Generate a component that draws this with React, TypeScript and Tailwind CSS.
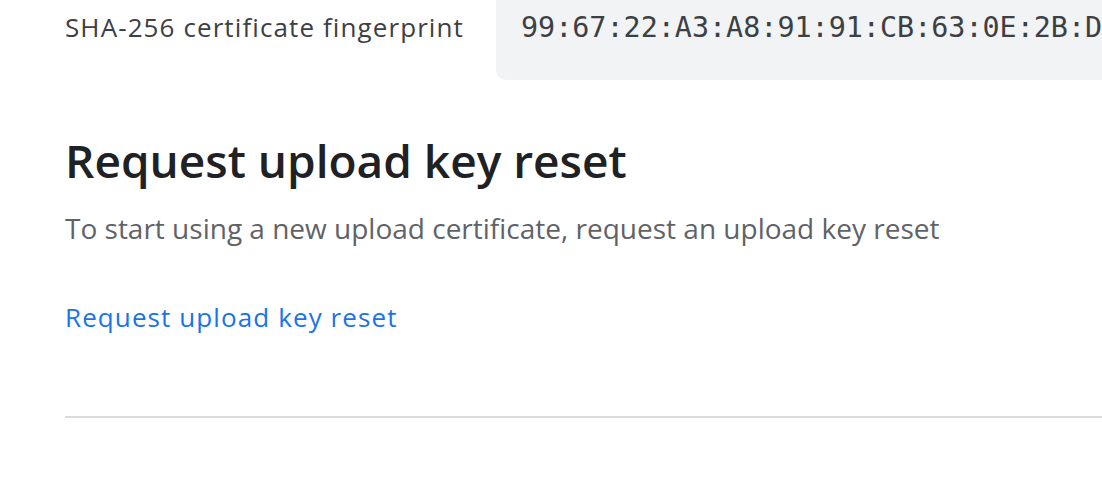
export default function App() {
  return (
    <div className="w-[1102px] h-[482px] overflow-hidden bg-white font-['Open_Sans','Noto_Sans',sans-serif]">
      <div className="pl-[65px]">
        <div className="flex items-stretch">
          <div className="w-[431px] pt-[9px] text-[26px] leading-[36px] tracking-[1.1px] text-[#3c4043] whitespace-nowrap">
            SHA-256 certificate fingerprint
          </div>
          <div className="flex-1 min-w-0 h-[80px] rounded-bl-[10px] bg-[#f1f3f4] pl-[25px] pt-[10px] whitespace-nowrap overflow-hidden font-['DejaVu_Sans_Mono',monospace] text-[28.4px] leading-[36px] text-[#3c4043]">
            99:67:22:A3:A8:91:91:CB:63:0E:2B:D
          </div>
        </div>
        <h2 className="mt-[50px] text-[46px] leading-[60px] font-semibold text-[#202124]">
          Request upload key reset
        </h2>
        <p className="mt-[20px] text-[28px] leading-[36px] text-[#5f6368]">
          To start using a new upload certificate, request an upload key reset
        </p>
        <a className="block mt-[53px] text-[26px] leading-[36px] tracking-[1.1px] text-[#1a73e8] font-medium">
          Request upload key reset
        </a>
        <div className="mt-[81px] h-[2px] bg-[#dadce0]" />
      </div>
    </div>
  );
}
